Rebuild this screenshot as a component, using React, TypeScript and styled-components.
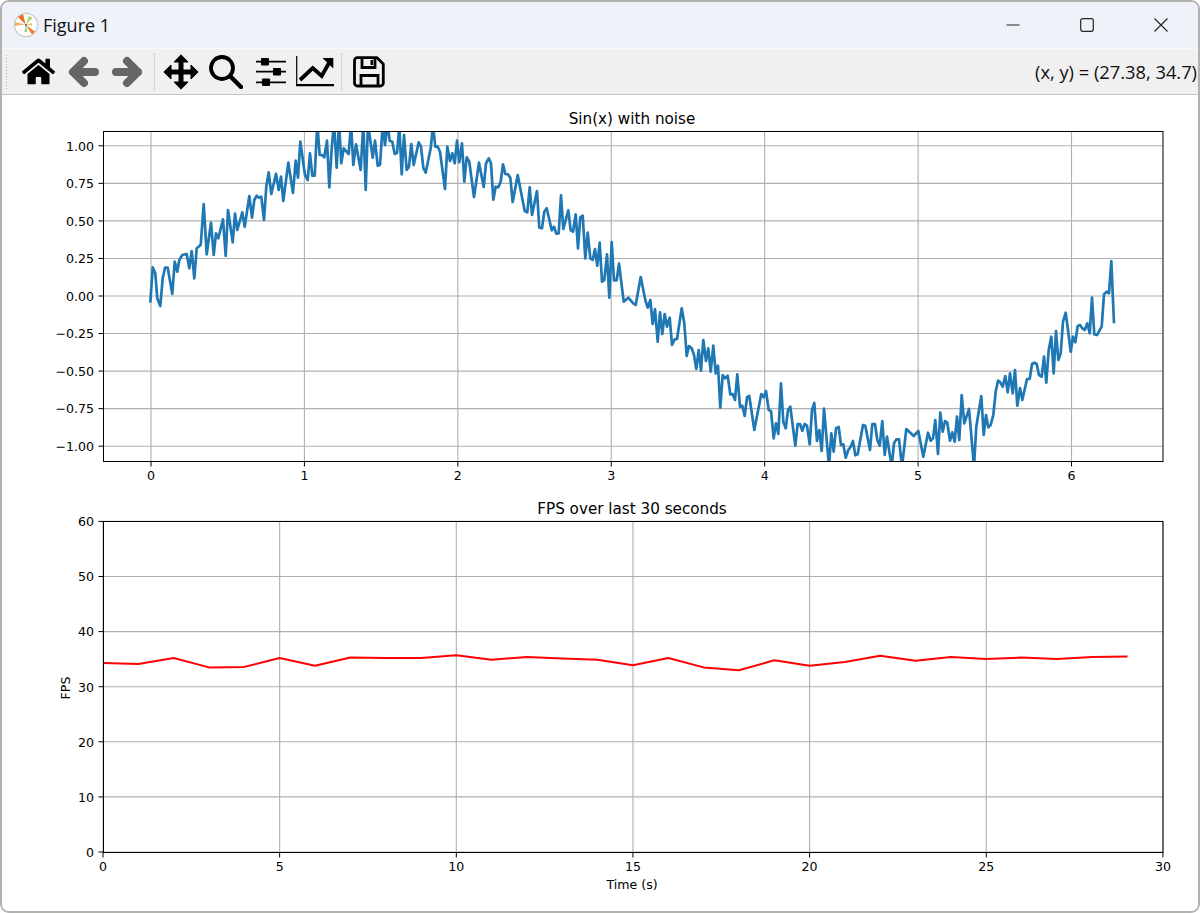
import React, { FC, ReactNode } from "react";
import styled, { createGlobalStyle } from "styled-components";
import { FaHome } from "react-icons/fa";

const GlobalStyle = createGlobalStyle`
  html, body {
    margin: 0;
    padding: 0;
    background: #fff;
  }
`;

const Window = styled.div`
  box-sizing: border-box;
  width: 1200px;
  height: 913px;
  border: 2px solid #b4b2ae;
  border-radius: 9px;
  overflow: hidden;
  display: flex;
  flex-direction: column;
  background: #fff;
`;

const TitleBar = styled.div`
  height: 46px;
  flex: none;
  display: flex;
  align-items: center;
  padding-left: 11px;
  background: #f0f2f9;
`;

const WindowTitle = styled.span`
  margin-left: 4px;
  flex: 1;
  font: 18px "Open Sans", "Noto Sans", sans-serif;
  color: #111;
`;

const WindowButton = styled.div`
  width: 74px;
  height: 46px;
  display: flex;
  align-items: center;
  justify-content: center;
`;

const Toolbar = styled.div`
  height: 47px;
  flex: none;
  box-sizing: border-box;
  display: flex;
  align-items: center;
  padding-left: 3px;
  background: #f0f0f0;
  border-top: 1px solid #f8f8fb;
  border-bottom: 1px solid #c4c4c4;
`;

const Grip = styled.div`
  width: 3px;
  height: 36px;
  margin-right: 6.5px;
  background-image: radial-gradient(#a8a8a8 0.7px, transparent 0.8px);
  background-size: 3px 3px;
`;

const ToolButton = styled.div<{ $width: number; $color?: string; $size?: number }>`
  width: ${(p) => p.$width}px;
  height: 44px;
  flex: none;
  display: flex;
  align-items: center;
  justify-content: center;
  color: ${(p) => p.$color ?? "#000"};
  font-size: ${(p) => p.$size ?? 32}px;
`;

const Separator = styled.div<{ $left: number; $right: number }>`
  width: 1px;
  height: 38px;
  flex: none;
  margin: 0 ${(p) => p.$right}px 0 ${(p) => p.$left}px;
  background: #d4d4d4;
`;

const Coordinates = styled.span`
  margin-left: auto;
  padding-right: 1px;
  font: 18.3px "Open Sans", "Noto Sans", sans-serif;
  color: #111;
  white-space: nowrap;
`;

const Figure = styled.div`
  flex: 1;
  display: flex;
  flex-direction: column;
  background: #fff;
`;

const Chart = styled.svg`
  display: block;
  flex: none;
  width: 1196px;
  font-family: "DejaVu Sans", sans-serif;
  fill: #000;
`;

const Title = styled.text`
  font-size: 15.2px;
  text-anchor: middle;
`;

const TickLabel = styled.text<{ $anchor: string }>`
  font-size: 12.6px;
  text-anchor: ${(p) => p.$anchor};
`;

const AxisLabel = styled.text`
  font-size: 12.6px;
  text-anchor: middle;
`;

type Tick = { at: number; label: string };

interface PlotProps {
  id: string;
  top: number;
  height: number;
  title: string;
  box: { x: number; y: number; w: number; h: number };
  xTicks: Tick[];
  yTicks: Tick[];
  children: ReactNode;
  extra?: ReactNode;
}

const Plot: FC<PlotProps> = ({ id, top, height, title, box, xTicks, yTicks, children, extra }) => {
  const bottom = box.y + box.h;
  const right = box.x + box.w;
  return (
    <Chart viewBox={`2 ${top} 1196 ${height}`} style={{ height }}>
      <clipPath id={id}>
        <rect x={box.x} y={box.y} width={box.w} height={box.h} />
      </clipPath>
      <Title x={632} y={box.y - 8}>
        {title}
      </Title>
      {xTicks.map((t) => (
        <g key={t.label}>
          <line x1={t.at} x2={t.at} y1={box.y} y2={bottom} stroke="#b0b0b0" strokeWidth={1.1} />
          <line x1={t.at} x2={t.at} y1={bottom} y2={bottom + 5} stroke="#000" strokeWidth={1} />
          <TickLabel $anchor="middle" x={t.at} y={bottom + 18.5}>
            {t.label}
          </TickLabel>
        </g>
      ))}
      {yTicks.map((t) => (
        <g key={t.label}>
          <line x1={box.x} x2={right} y1={t.at} y2={t.at} stroke="#b0b0b0" strokeWidth={1.1} />
          <line x1={box.x - 5} x2={box.x} y1={t.at} y2={t.at} stroke="#000" strokeWidth={1} />
          <TickLabel $anchor="end" x={box.x - 9.5} y={t.at + 4.8}>
            {t.label}
          </TickLabel>
        </g>
      ))}
      <g clipPath={`url(#${id})`}>{children}</g>
      <rect x={box.x} y={box.y} width={box.w} height={box.h} fill="none" stroke="#000" strokeWidth={1} />
      {extra}
    </Chart>
  );
};

// noisy sine, traced at 3x scale: [window x, window y, x0, y0, x1, y1, ...]
const sineTrace: number[][] = [
  [100, 125, 151,533,158,427,166,445,172,520,181,543,188,460,195,428,203,428,217,507,224,410,232,440,238,405,247,390,260,387,268,430,275,378,283,460,290,370,302,360,311,237,320,388,333,293,341,390,348,325,355,340,369,283,377,393,384,255,398,352,405,266,412,315,427,262,434,305,448,213,456,278,463,225,470,212,477,218,484,215,492,285,499,185,506,142,514,207,528,146,536,195,543,155,550,228,565,113,579,204,587,107,594,158,601,50,615,150,623,165,630,85,637,152,644,152,652,-5,659,90,666,90,673,97,681,47,688,187,695,70,702,-5,710,128,717,-10,724,115,731,70,746,87,753,-5,760,120,768,58,782,135,790,-5,797,195,804,-5,818,98,825,47,833,122,840,120,848,0,855,60,862,-5,869,47,877,50,884,87,891,84,898,5,905,148,912,30,920,135,927,125,934,57,941,120,956,52,963,65,970,128,977,143,992,70,999,0,1006,65,1013,65,1020,80,1035,192,1042,65,1050,108,1057,85,1064,115,1071,47,1078,112],
  [450, 125, 36,55,43,170,50,97,58,110,72,216,87,113,101,186,108,115,116,100,123,115,130,224,137,185,145,187,152,170,159,118,166,147,174,148,181,158,188,231,203,150,224,258,232,262,239,187,246,270,261,198,268,308,276,310,283,260,290,250,305,316,312,305,319,326,326,325,333,211,340,312,355,256,362,316,369,320,377,268,384,370,391,277,398,272,406,400,413,323,421,400,428,405,435,372,442,422,449,353,456,470,463,465,471,388,478,518,485,351,492,466,500,466,507,416,521,530,535,518,550,535,557,540,572,456,586,525,593,548],
  [600, 280, 151,60,158,132,165,87,173,185,180,97,187,162,194,102,201,140,209,113,216,195,224,178,231,177,245,85,253,130,260,228,267,198,275,205,282,225,289,267,296,210,303,272,310,180,318,243,325,205,332,275,340,197,347,280,354,257,361,383,368,285,375,295,383,287,391,343,398,342,405,360,412,283,420,380,427,377,434,408,441,352,448,348,463,450,484,342,491,352,498,333,506,390,513,393,521,475,528,430,535,462,543,310,550,425,557,445,564,390,571,380,586,497,593,432,600,432,607,452,614,432,621,437,629,493,636,390,643,369,651,483,658,450,665,513,672,386,687,560,694,460,701,515,708,445,716,441,723,495,730,493,737,533,745,510,752,500,759,483,766,526,773,523,789,435,796,437,810,510,817,432,825,432,832,480,839,497,847,423,854,525,861,470,875,560,882,490,889,478,897,478],
  [880, 250, 66,650,79,537,101,558,115,543,130,620,144,548,152,572,159,565,166,510,174,612,181,488,188,545,195,513,202,518,210,572,217,547,224,575,231,500,238,570,245,435,253,520,267,477,282,650,289,530,304,438,311,555,318,495,325,532,332,525,340,495,347,425,354,392,361,397,368,410,376,378,383,427,390,370,398,430,405,360,412,467,420,414,427,450,441,387,449,387,456,342,463,338,470,342,477,375,485,380,492,320,499,398,506,300,514,260,521,370,528,243,535,330,542,310,549,215,557,188,564,240,572,305,579,260,586,277,593,228,600,225,607,235,614,240,622,220,629,250,636,143,643,253,651,255,665,230,672,133,680,125,687,130,694,33,702,220],
];

const sinePoints = sineTrace
  .flatMap(([ox, oy, ...coords]) =>
    coords.flatMap((v, i) => (i % 2 === 0 ? [`${(ox + v / 3).toFixed(1)},${(oy + coords[i + 1] / 3).toFixed(1)}`] : [])),
  )
  .join(" ");

const fps = [
  34.3, 34.1, 35.2, 33.5, 33.6, 35.2, 33.8, 35.3, 35.2, 35.2, 35.7, 34.9, 35.4, 35.1, 34.9, 33.9, 35.2, 33.5, 33.0, 34.8,
  33.8, 34.5, 35.6, 34.7, 35.4, 35.0, 35.3, 35.0, 35.4, 35.5,
];

const fpsPoints = fps.map((v, i) => `${103 + i * 35.33},${(852 - v * 5.51).toFixed(1)}`).join(" ");

const sineXTicks: Tick[] = [0, 1, 2, 3, 4, 5, 6].map((v) => ({ at: 151 + v * 153.42, label: String(v) }));
const sineYTicks: Tick[] = [1, 0.75, 0.5, 0.25, 0, -0.25, -0.5, -0.75, -1].map((v) => ({
  at: 296 - v * 150.2,
  label: v.toFixed(2).replace("-", "\u2212"),
}));
const fpsXTicks: Tick[] = [0, 5, 10, 15, 20, 25, 30].map((v) => ({ at: 103 + v * 35.33, label: String(v) }));
const fpsYTicks: Tick[] = [0, 10, 20, 30, 40, 50, 60].map((v) => ({ at: 852 - v * 5.51, label: String(v) }));

const Logo = () => (
  <svg width="26" height="26" viewBox="0 0 26 26">
    <circle cx="13" cy="13" r="11.6" fill="#fff" stroke="#c9c9c9" strokeWidth="1.2" />
    <path d="M12.5 12.5 L5 5 L10 2 Z" fill="#f26a1b" />
    <path d="M12.5 13 L22 19.5 L19 22.5 Z" fill="#ee7d2a" />
    <path d="M12.5 12.5 L2 10 L2 14 Z" fill="#f6b26b" />
    <path d="M13 12.5 L16 4 L19.5 6 Z" fill="#a8d26a" />
    <path d="M12.5 13 L11.5 20 L14.5 20 Z" fill="#8fd08f" />
    <path d="M13 13 L19 11 L19 13.5 Z" fill="#e8c45a" />
    <circle cx="13" cy="13" r="1.1" fill="#556" />
  </svg>
);

const Minimize = () => (
  <svg width="14" height="14" viewBox="0 0 14 14">
    <path d="M0.5 7h13" stroke="#222" strokeWidth="1.1" fill="none" />
  </svg>
);

const Maximize = () => (
  <svg width="14" height="14" viewBox="0 0 14 14">
    <rect x="0.7" y="0.7" width="12.6" height="12.6" rx="2" stroke="#222" strokeWidth="1.2" fill="none" />
  </svg>
);

const Close = () => (
  <svg width="14" height="14" viewBox="0 0 14 14">
    <path d="M0.5 0.5l13 13M13.5 0.5l-13 13" stroke="#222" strokeWidth="1.1" fill="none" />
  </svg>
);

const BackArrow = () => (
  <svg width="32" height="32" viewBox="0 0 32 32">
    <path
      d="M27 16H5M16 5L5 16l11 11"
      stroke="#666"
      strokeWidth="8"
      strokeLinecap="round"
      strokeLinejoin="round"
      fill="none"
    />
  </svg>
);

const ForwardArrow = () => (
  <svg width="32" height="32" viewBox="0 0 32 32">
    <path
      d="M5 16h22M16 5l11 11-11 11"
      stroke="#666"
      strokeWidth="8"
      strokeLinecap="round"
      strokeLinejoin="round"
      fill="none"
    />
  </svg>
);

const Move = () => (
  <svg width="36" height="36" viewBox="0 0 36 36">
    <path
      d="M18 .8l7 7.2h-5v8h8v-5l7.2 7-7.2 7v-5h-8v8h5l-7 7.2-7-7.2h5v-8H8v5L.8 18 8 11v5h8V8h-5z"
      fill="#000"
      stroke="#000"
      strokeWidth="1"
      strokeLinejoin="round"
    />
  </svg>
);

const Search = () => (
  <svg width="34" height="34" viewBox="0 0 34 34">
    <circle cx="13" cy="13" r="11" stroke="#000" strokeWidth="3.8" fill="none" />
    <path d="M21 21l11 11" stroke="#000" strokeWidth="4.4" strokeLinecap="round" fill="none" />
  </svg>
);

const Sliders = () => (
  <svg width="32" height="30" viewBox="0 0 32 30">
    <path d="M1 4.7h30M1 14.7h30M1 25.3h30" stroke="#000" strokeWidth="1.8" fill="none" />
    <rect x="6" y="1" width="8" height="7.6" rx="1" fill="#000" />
    <rect x="18" y="11" width="8" height="7.6" rx="1" fill="#000" />
    <rect x="7" y="21.4" width="8" height="7.6" rx="1" fill="#000" />
  </svg>
);

const LineChart = () => (
  <svg width="38" height="31" viewBox="0 0 38 31">
    <path d="M.7 0v29" stroke="#000" strokeWidth="1.2" fill="none" />
    <path d="M0 29.2h38" stroke="#000" strokeWidth="2.2" fill="none" />
    <path d="M4 24L16.7 12l9 8L33 7" stroke="#000" strokeWidth="3.8" fill="none" />
    <path d="M26.5 2h10.8v10.5z" fill="#000" />
  </svg>
);

const Save = () => (
  <svg width="32" height="32" viewBox="0 0 32 32">
    <path
      d="M4.5 1.7H24l6.3 6.3v19a3 3 0 0 1-3 3H4.5a3 3 0 0 1-3-3V4.7a3 3 0 0 1 3-3z"
      stroke="#000"
      strokeWidth="2.8"
      strokeLinejoin="round"
      fill="none"
    />
    <path d="M9 2v9.5h13V2M8 30V19.5h17V30" stroke="#000" strokeWidth="2.8" fill="none" />
    <path d="M17.5 4h2.5v5h-2.5z" fill="#000" />
  </svg>
);

const App: FC = () => {
  return (
    <>
      <GlobalStyle />
      <Window>
        <TitleBar>
          <Logo />
          <WindowTitle>Figure 1</WindowTitle>
          <WindowButton>
            <Minimize />
          </WindowButton>
          <WindowButton>
            <Maximize />
          </WindowButton>
          <WindowButton>
            <Close />
          </WindowButton>
        </TitleBar>
        <Toolbar>
          <Grip />
          <ToolButton $width={47} $size={33}>
            <FaHome />
          </ToolButton>
          <ToolButton $width={44}>
            <BackArrow />
          </ToolButton>
          <ToolButton $width={43}>
            <ForwardArrow />
          </ToolButton>
          <Separator $left={5.5} $right={4} />
          <ToolButton $width={44}>
            <Move />
          </ToolButton>
          <ToolButton $width={46}>
            <Search />
          </ToolButton>
          <ToolButton $width={43}>
            <Sliders />
          </ToolButton>
          <ToolButton $width={46}>
            <LineChart />
          </ToolButton>
          <Separator $left={3} $right={5} />
          <ToolButton $width={44}>
            <Save />
          </ToolButton>
          <Coordinates>(x, y) = (27.38, 34.7)</Coordinates>
        </Toolbar>
        <Figure>
          <Plot
            id="sine-clip"
            top={95}
            height={395}
            title="Sin(x) with noise"
            box={{ x: 103.5, y: 131.5, w: 1059.5, h: 330 }}
            xTicks={sineXTicks}
            yTicks={sineYTicks}
          >
            <polyline points={sinePoints} fill="none" stroke="#1f77b4" strokeWidth={2.7} strokeLinejoin="round" />
          </Plot>
          <Plot
            id="fps-clip"
            top={490}
            height={421}
            title="FPS over last 30 seconds"
            box={{ x: 103.5, y: 521.5, w: 1059.5, h: 331 }}
            xTicks={fpsXTicks}
            yTicks={fpsYTicks}
            extra={
              <>
                <AxisLabel x={632} y={889}>
                  Time (s)
                </AxisLabel>
                <AxisLabel transform="translate(70 688) rotate(-90)">FPS</AxisLabel>
              </>
            }
          >
            <polyline points={fpsPoints} fill="none" stroke="#ff0000" strokeWidth={2} strokeLinejoin="round" />
          </Plot>
        </Figure>
      </Window>
    </>
  );
};

export default App;
